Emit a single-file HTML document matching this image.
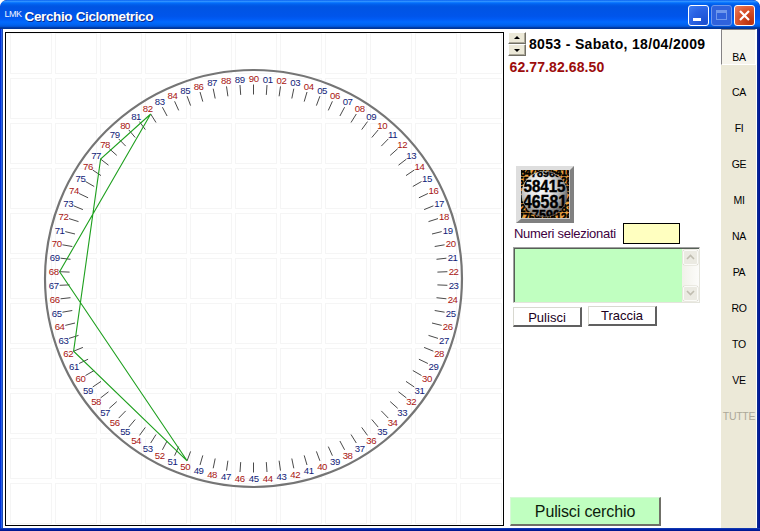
<!DOCTYPE html>
<html><head><meta charset="utf-8"><title>Cerchio Ciclometrico</title>
<style>
html,body{margin:0;padding:0;}
body{width:760px;height:531px;position:relative;overflow:hidden;background:#fff;font-family:"Liberation Sans",Arial,sans-serif;}
.abs{position:absolute;}
#win{position:absolute;left:0;top:0;width:760px;height:531px;background:linear-gradient(to right,#0030d8 0,#0030d8 1px,#2860e8 1px,#2860e8 2px,#1c4ab0 2px,#1c4ab0 3px,#0a2aa0 3px,#0a2aa0 757px,#0a2a90 757px,#0a2a90 758px,#06209a 758px,#06209a 759px,#001596 759px);border-radius:7px 7px 0 0;overflow:hidden;}
#title{position:absolute;left:0;top:0;width:760px;height:29px;border-radius:7px 7px 0 0;
background:linear-gradient(to bottom,#0058ee 0%,#3593ff 4%,#288eff 6%,#127dff 8%,#036ffc 10%,#0262ee 14%,#0057e5 20%,#0054e3 24%,#0055eb 56%,#005bf5 66%,#026afe 76%,#0062ef 86%,#0052d6 92%,#0040ab 94%,#003092 100%);}
#title .lmk{position:absolute;left:4.5px;top:10px;font-size:9px;color:#f0f6ff;line-height:9px;letter-spacing:-0.5px;}
#title .cap{position:absolute;left:24.5px;top:9px;font-size:13.5px;letter-spacing:-0.36px;font-weight:bold;color:#fff;line-height:16px;text-shadow:1px 1px 0 #0a2a8a;white-space:nowrap;}
.tb{position:absolute;top:5px;width:21px;height:21px;border-radius:3px;box-sizing:border-box;border:1px solid #fff;}
.tb.min{left:688px;background:radial-gradient(circle at 85% 90%,#1a4fd0 0%,#2a63e4 60%,#3f7df2 100%);}
.tb.max{left:711px;background:#2f62dc;border-color:#6f98ec;}
.tb.cls{left:734px;background:radial-gradient(circle at 80% 85%,#b9300c 0%,#d9522a 55%,#ee8060 100%);}
.tb.min i{position:absolute;left:4px;top:12px;width:8px;height:3px;background:#fff;}
.tb.max i{position:absolute;left:4px;top:4px;width:11px;height:10px;box-sizing:border-box;border:1px solid #6f98ec;border-top-width:3px;}
#client{position:absolute;left:3px;top:29px;width:754px;height:499px;background:#fff;}
#botb{position:absolute;left:0;top:528px;width:760px;height:3px;background:linear-gradient(to bottom,#1038b0 0,#1038b0 1px,#0020a8 1px,#0020a8 2px,#001890 2px);}
#canvasbox{position:absolute;left:5px;top:32px;width:499px;height:494px;box-sizing:border-box;border:1px solid #000;}
svg.cv{position:absolute;left:0;top:0;}
#strip{position:absolute;left:721px;top:29px;width:35px;height:499px;background:#ece9d8;}
.tab{position:absolute;left:721px;width:35px;height:36px;font-family:"Liberation Sans",Arial,sans-serif;font-size:10.5px;letter-spacing:-0.3px;color:#000;text-align:center;}
.tab span{position:absolute;left:1px;right:0;top:20px;line-height:14px;}
.tab.sel{box-sizing:border-box;border-left:1px solid #848284;border-top:1px solid #848284;border-right:1px solid #fff;border-bottom:1px solid #fff;background:#f6f4ec;}
.tab.sel span{left:1px;top:20px;}
.tab.dis{color:#aca899;}
.spin{position:absolute;left:508px;width:18px;height:12px;box-sizing:border-box;background:#ece9d8;border:1px solid;border-color:#fff #716f64 #716f64 #fff;box-shadow:inset -1px -1px 0 #aca899;}
.spin i{position:absolute;left:5px;width:0;height:0;border-left:3px solid transparent;border-right:3px solid transparent;}
.spin.up i{top:3px;border-bottom:3px solid #000;}
.spin.dn i{top:4px;border-top:3px solid #000;}
#date{position:absolute;left:529px;top:35px;font-size:14px;letter-spacing:0.33px;font-weight:bold;color:#000;line-height:18px;white-space:nowrap;}
#nums{position:absolute;left:509.5px;top:58px;font-size:14px;letter-spacing:0.1px;font-weight:bold;color:#9c0c0c;line-height:18px;white-space:nowrap;}
#imgbtn{position:absolute;left:516px;top:166px;width:58px;height:57px;box-sizing:border-box;background:#c8c8c8;border-style:solid;border-width:4px 4px 4px 5px;border-color:#dedede #808080 #808080 #dedede;box-shadow:inset 1px 1px 0 #bdbdbd;}
svg.ball{position:absolute;left:521px;top:170px;}
#lbl{position:absolute;left:514px;top:226px;font-size:13px;letter-spacing:-0.28px;color:#400040;line-height:16px;white-space:nowrap;}
#ybox{position:absolute;left:623px;top:223px;width:57px;height:21px;box-sizing:border-box;border:1px solid #000;background:#ffffc0;}
#ta{position:absolute;left:513px;top:247px;width:187px;height:56px;box-sizing:border-box;background:#c0ffc0;border:1px solid;border-color:#a0a0a0 #e4e4dc #e4e4dc #a0a0a0;box-shadow:inset 1px 1px 0 #566056;}
#sb{position:absolute;left:682px;top:249px;width:17px;height:53px;background:linear-gradient(to right,#f2f1ea,#fcfcfa);}
.sbb{position:absolute;left:683px;width:15px;height:15px;box-sizing:border-box;background:#ebeae2;border:1px solid #fbfbf8;border-radius:2px;box-shadow:0 0 0 0.5px #dddbd0;}
.sbb svg{position:absolute;left:2px;top:3px;}
.btn{position:absolute;box-sizing:border-box;background:#fff;border-style:solid;border-width:1px 2px 2px 1px;border-color:#d8d8d0 #606060 #606060 #d8d8d0;font-size:13px;color:#200020;text-align:center;white-space:nowrap;}
#big{position:absolute;left:510px;top:497px;width:151px;height:29px;letter-spacing:-0.13px;box-sizing:border-box;background:#c0ffc0;border-style:solid;border-width:1px 2px 2px 1px;border-color:#d8f8d8 #707068 #707068 #d8f8d8;font-size:16px;color:#0c1c0c;text-align:center;line-height:28px;white-space:nowrap;}
</style></head><body>
<div id="win">
<div id="title"><span class="lmk">LMK</span><span class="cap">Cerchio Ciclometrico</span>
<div class="tb min"><i></i></div><div class="tb max"><i></i></div>
<div class="tb cls"><svg width="19" height="19" viewBox="0 0 19 19"><path d="M5 5L14 14M14 5L5 14" stroke="#fff" stroke-width="2.2" stroke-linecap="butt"/></svg></div>
</div>
<div id="client"></div><div id="botb"></div>
</div>
<div id="canvasbox"></div>
<svg class="cv" width="760" height="531" viewBox="0 0 760 531"><g fill="none" stroke="#f5f5f5" stroke-width="1" shape-rendering="crispEdges"><rect x="10.5" y="33.5" width="41" height="40"/><rect x="10.5" y="78.5" width="41" height="40"/><rect x="10.5" y="123.5" width="41" height="40"/><rect x="10.5" y="168.5" width="41" height="40"/><rect x="10.5" y="213.5" width="41" height="40"/><rect x="10.5" y="258.5" width="41" height="40"/><rect x="10.5" y="303.5" width="41" height="40"/><rect x="10.5" y="348.5" width="41" height="40"/><rect x="10.5" y="393.5" width="41" height="40"/><rect x="10.5" y="438.5" width="41" height="40"/><rect x="10.5" y="483.5" width="41" height="40"/><rect x="55.5" y="33.5" width="41" height="40"/><rect x="55.5" y="78.5" width="41" height="40"/><rect x="55.5" y="123.5" width="41" height="40"/><rect x="55.5" y="168.5" width="41" height="40"/><rect x="55.5" y="213.5" width="41" height="40"/><rect x="55.5" y="258.5" width="41" height="40"/><rect x="55.5" y="303.5" width="41" height="40"/><rect x="55.5" y="348.5" width="41" height="40"/><rect x="55.5" y="393.5" width="41" height="40"/><rect x="55.5" y="438.5" width="41" height="40"/><rect x="55.5" y="483.5" width="41" height="40"/><rect x="100.5" y="33.5" width="41" height="40"/><rect x="100.5" y="78.5" width="41" height="40"/><rect x="100.5" y="123.5" width="41" height="40"/><rect x="100.5" y="168.5" width="41" height="40"/><rect x="100.5" y="213.5" width="41" height="40"/><rect x="100.5" y="258.5" width="41" height="40"/><rect x="100.5" y="303.5" width="41" height="40"/><rect x="100.5" y="348.5" width="41" height="40"/><rect x="100.5" y="393.5" width="41" height="40"/><rect x="100.5" y="438.5" width="41" height="40"/><rect x="100.5" y="483.5" width="41" height="40"/><rect x="145.5" y="33.5" width="41" height="40"/><rect x="145.5" y="78.5" width="41" height="40"/><rect x="145.5" y="123.5" width="41" height="40"/><rect x="145.5" y="168.5" width="41" height="40"/><rect x="145.5" y="213.5" width="41" height="40"/><rect x="145.5" y="258.5" width="41" height="40"/><rect x="145.5" y="303.5" width="41" height="40"/><rect x="145.5" y="348.5" width="41" height="40"/><rect x="145.5" y="393.5" width="41" height="40"/><rect x="145.5" y="438.5" width="41" height="40"/><rect x="145.5" y="483.5" width="41" height="40"/><rect x="190.5" y="33.5" width="41" height="40"/><rect x="190.5" y="78.5" width="41" height="40"/><rect x="190.5" y="123.5" width="41" height="40"/><rect x="190.5" y="168.5" width="41" height="40"/><rect x="190.5" y="213.5" width="41" height="40"/><rect x="190.5" y="258.5" width="41" height="40"/><rect x="190.5" y="303.5" width="41" height="40"/><rect x="190.5" y="348.5" width="41" height="40"/><rect x="190.5" y="393.5" width="41" height="40"/><rect x="190.5" y="438.5" width="41" height="40"/><rect x="190.5" y="483.5" width="41" height="40"/><rect x="235.5" y="33.5" width="41" height="40"/><rect x="235.5" y="78.5" width="41" height="40"/><rect x="235.5" y="123.5" width="41" height="40"/><rect x="235.5" y="168.5" width="41" height="40"/><rect x="235.5" y="213.5" width="41" height="40"/><rect x="235.5" y="258.5" width="41" height="40"/><rect x="235.5" y="303.5" width="41" height="40"/><rect x="235.5" y="348.5" width="41" height="40"/><rect x="235.5" y="393.5" width="41" height="40"/><rect x="235.5" y="438.5" width="41" height="40"/><rect x="235.5" y="483.5" width="41" height="40"/><rect x="280.5" y="33.5" width="41" height="40"/><rect x="280.5" y="78.5" width="41" height="40"/><rect x="280.5" y="123.5" width="41" height="40"/><rect x="280.5" y="168.5" width="41" height="40"/><rect x="280.5" y="213.5" width="41" height="40"/><rect x="280.5" y="258.5" width="41" height="40"/><rect x="280.5" y="303.5" width="41" height="40"/><rect x="280.5" y="348.5" width="41" height="40"/><rect x="280.5" y="393.5" width="41" height="40"/><rect x="280.5" y="438.5" width="41" height="40"/><rect x="280.5" y="483.5" width="41" height="40"/><rect x="325.5" y="33.5" width="41" height="40"/><rect x="325.5" y="78.5" width="41" height="40"/><rect x="325.5" y="123.5" width="41" height="40"/><rect x="325.5" y="168.5" width="41" height="40"/><rect x="325.5" y="213.5" width="41" height="40"/><rect x="325.5" y="258.5" width="41" height="40"/><rect x="325.5" y="303.5" width="41" height="40"/><rect x="325.5" y="348.5" width="41" height="40"/><rect x="325.5" y="393.5" width="41" height="40"/><rect x="325.5" y="438.5" width="41" height="40"/><rect x="325.5" y="483.5" width="41" height="40"/><rect x="370.5" y="33.5" width="41" height="40"/><rect x="370.5" y="78.5" width="41" height="40"/><rect x="370.5" y="123.5" width="41" height="40"/><rect x="370.5" y="168.5" width="41" height="40"/><rect x="370.5" y="213.5" width="41" height="40"/><rect x="370.5" y="258.5" width="41" height="40"/><rect x="370.5" y="303.5" width="41" height="40"/><rect x="370.5" y="348.5" width="41" height="40"/><rect x="370.5" y="393.5" width="41" height="40"/><rect x="370.5" y="438.5" width="41" height="40"/><rect x="370.5" y="483.5" width="41" height="40"/><rect x="415.5" y="33.5" width="41" height="40"/><rect x="415.5" y="78.5" width="41" height="40"/><rect x="415.5" y="123.5" width="41" height="40"/><rect x="415.5" y="168.5" width="41" height="40"/><rect x="415.5" y="213.5" width="41" height="40"/><rect x="415.5" y="258.5" width="41" height="40"/><rect x="415.5" y="303.5" width="41" height="40"/><rect x="415.5" y="348.5" width="41" height="40"/><rect x="415.5" y="393.5" width="41" height="40"/><rect x="415.5" y="438.5" width="41" height="40"/><rect x="415.5" y="483.5" width="41" height="40"/><rect x="460.5" y="33.5" width="41" height="40"/><rect x="460.5" y="78.5" width="41" height="40"/><rect x="460.5" y="123.5" width="41" height="40"/><rect x="460.5" y="168.5" width="41" height="40"/><rect x="460.5" y="213.5" width="41" height="40"/><rect x="460.5" y="258.5" width="41" height="40"/><rect x="460.5" y="303.5" width="41" height="40"/><rect x="460.5" y="348.5" width="41" height="40"/><rect x="460.5" y="393.5" width="41" height="40"/><rect x="460.5" y="438.5" width="41" height="40"/><rect x="460.5" y="483.5" width="41" height="40"/></g><circle cx="253.5" cy="278.5" r="208.5" fill="none" stroke="#757575" stroke-width="2.15"/><path d="M267.0 85.0L266.3 94.9M280.5 86.4L279.1 96.3M293.8 88.7L291.8 98.5M307.0 92.0L304.2 101.6M319.9 96.2L316.4 105.6M332.4 101.3L328.3 110.4M344.6 107.2L339.9 116.0M356.3 114.0L351.0 122.5M367.5 121.6L361.7 129.6M378.2 129.9L371.8 137.5M388.3 138.9L381.3 146.1M397.7 148.7L390.2 155.4M406.4 159.1L398.5 165.2M414.3 170.0L406.0 175.6M421.5 181.5L412.8 186.5M427.9 193.5L418.9 197.8M433.4 205.8L424.1 209.6M438.0 218.6L428.5 221.6M441.7 231.6L432.0 234.0M444.6 244.8L434.7 246.5M446.4 258.2L436.5 259.3M447.4 271.7L437.4 272.1M447.4 285.3L437.4 284.9M446.4 298.8L436.5 297.7M444.6 312.2L434.7 310.5M441.7 325.4L432.0 323.0M438.0 338.4L428.5 335.4M433.4 351.2L424.1 347.4M427.9 363.5L418.9 359.2M421.5 375.5L412.8 370.5M414.3 387.0L406.0 381.4M406.4 397.9L398.5 391.8M397.7 408.3L390.2 401.6M388.3 418.1L381.3 410.9M378.2 427.1L371.8 419.5M367.5 435.4L361.7 427.4M356.3 443.0L351.0 434.5M344.6 449.8L339.9 441.0M332.4 455.7L328.3 446.6M319.9 460.8L316.4 451.4M307.0 465.0L304.2 455.4M293.8 468.3L291.8 458.5M280.5 470.6L279.1 460.7M267.0 472.0L266.3 462.1M253.5 472.5L253.5 462.5M240.0 472.0L240.7 462.1M226.5 470.6L227.9 460.7M213.2 468.3L215.2 458.5M200.0 465.0L202.8 455.4M187.1 460.8L190.6 451.4M174.6 455.7L178.7 446.6M162.4 449.8L167.1 441.0M150.7 443.0L156.0 434.5M139.5 435.4L145.3 427.4M128.8 427.1L135.2 419.5M118.7 418.1L125.7 410.9M109.3 408.3L116.8 401.6M100.6 397.9L108.5 391.8M92.7 387.0L101.0 381.4M85.5 375.5L94.2 370.5M79.1 363.5L88.1 359.2M73.6 351.2L82.9 347.4M69.0 338.4L78.5 335.4M65.3 325.4L75.0 323.0M62.4 312.2L72.3 310.5M60.6 298.8L70.5 297.7M59.6 285.3L69.6 284.9M59.6 271.7L69.6 272.1M60.6 258.2L70.5 259.3M62.4 244.8L72.3 246.5M65.3 231.6L75.0 234.0M69.0 218.6L78.5 221.6M73.6 205.8L82.9 209.6M79.1 193.5L88.1 197.8M85.5 181.5L94.2 186.5M92.7 170.0L101.0 175.6M100.6 159.1L108.5 165.2M109.3 148.7L116.8 155.4M118.7 138.9L125.7 146.1M128.8 129.9L135.2 137.5M139.5 121.6L145.3 129.6M150.7 114.0L156.0 122.5M162.4 107.2L167.1 116.0M174.6 101.3L178.7 110.4M187.1 96.2L190.6 105.6M200.0 92.0L202.8 101.6M213.2 88.7L215.2 98.5M226.5 86.4L227.9 96.3M240.0 85.0L240.7 94.9M253.5 84.5L253.5 94.5" stroke="#4a4a4a" stroke-width="1" fill="none"/><polygon points="73.6,351.2 100.6,159.1 150.7,114.0 59.6,271.7 187.1,460.8" fill="none" stroke="#1fa01f" stroke-width="1.1"/><g font-family="Liberation Sans, Arial, sans-serif" font-size="9.6" letter-spacing="-0.4" text-anchor="middle"><text x="267.7" y="82.5" fill="#101c78">01</text><text x="281.5" y="83.9" fill="#a81410">02</text><text x="295.3" y="86.4" fill="#101c78">03</text><text x="308.8" y="89.7" fill="#a81410">04</text><text x="322.1" y="94.1" fill="#101c78">05</text><text x="335.0" y="99.3" fill="#a81410">06</text><text x="347.6" y="105.4" fill="#101c78">07</text><text x="359.7" y="112.4" fill="#a81410">08</text><text x="371.3" y="120.2" fill="#101c78">09</text><text x="382.3" y="128.8" fill="#a81410">10</text><text x="392.6" y="138.1" fill="#101c78">11</text><text x="402.3" y="148.2" fill="#a81410">12</text><text x="411.3" y="158.9" fill="#101c78">13</text><text x="419.5" y="170.2" fill="#a81410">14</text><text x="426.9" y="182.0" fill="#101c78">15</text><text x="433.5" y="194.3" fill="#a81410">16</text><text x="439.1" y="207.1" fill="#101c78">17</text><text x="443.9" y="220.2" fill="#a81410">18</text><text x="447.8" y="233.6" fill="#101c78">19</text><text x="450.7" y="247.3" fill="#a81410">20</text><text x="452.6" y="261.1" fill="#101c78">21</text><text x="453.6" y="275.0" fill="#a81410">22</text><text x="453.6" y="289.0" fill="#101c78">23</text><text x="452.6" y="302.9" fill="#a81410">24</text><text x="450.7" y="316.7" fill="#101c78">25</text><text x="447.8" y="330.4" fill="#a81410">26</text><text x="443.9" y="343.8" fill="#101c78">27</text><text x="439.1" y="356.9" fill="#a81410">28</text><text x="433.5" y="369.7" fill="#101c78">29</text><text x="426.9" y="382.0" fill="#a81410">30</text><text x="419.5" y="393.8" fill="#101c78">31</text><text x="411.3" y="405.1" fill="#a81410">32</text><text x="402.3" y="415.8" fill="#101c78">33</text><text x="392.6" y="425.9" fill="#a81410">34</text><text x="382.3" y="435.2" fill="#101c78">35</text><text x="371.3" y="443.8" fill="#a81410">36</text><text x="359.7" y="451.6" fill="#101c78">37</text><text x="347.6" y="458.6" fill="#a81410">38</text><text x="335.0" y="464.7" fill="#101c78">39</text><text x="322.1" y="469.9" fill="#a81410">40</text><text x="308.8" y="474.3" fill="#101c78">41</text><text x="295.3" y="477.6" fill="#a81410">42</text><text x="281.5" y="480.1" fill="#101c78">43</text><text x="267.7" y="481.5" fill="#a81410">44</text><text x="253.7" y="482.0" fill="#101c78">45</text><text x="239.7" y="481.5" fill="#a81410">46</text><text x="225.9" y="480.1" fill="#101c78">47</text><text x="212.1" y="477.6" fill="#a81410">48</text><text x="198.6" y="474.3" fill="#101c78">49</text><text x="185.3" y="469.9" fill="#a81410">50</text><text x="172.4" y="464.7" fill="#101c78">51</text><text x="159.8" y="458.6" fill="#a81410">52</text><text x="147.7" y="451.6" fill="#101c78">53</text><text x="136.1" y="443.8" fill="#a81410">54</text><text x="125.1" y="435.2" fill="#101c78">55</text><text x="114.8" y="425.9" fill="#a81410">56</text><text x="105.1" y="415.8" fill="#101c78">57</text><text x="96.1" y="405.1" fill="#a81410">58</text><text x="87.9" y="393.8" fill="#101c78">59</text><text x="80.5" y="382.0" fill="#a81410">60</text><text x="73.9" y="369.7" fill="#101c78">61</text><text x="68.3" y="356.9" fill="#a81410">62</text><text x="63.5" y="343.8" fill="#101c78">63</text><text x="59.6" y="330.4" fill="#a81410">64</text><text x="56.7" y="316.7" fill="#101c78">65</text><text x="54.8" y="302.9" fill="#a81410">66</text><text x="53.8" y="289.0" fill="#101c78">67</text><text x="53.8" y="275.0" fill="#a81410">68</text><text x="54.8" y="261.1" fill="#101c78">69</text><text x="56.7" y="247.3" fill="#a81410">70</text><text x="59.6" y="233.6" fill="#101c78">71</text><text x="63.5" y="220.2" fill="#a81410">72</text><text x="68.3" y="207.1" fill="#101c78">73</text><text x="73.9" y="194.3" fill="#a81410">74</text><text x="80.5" y="182.0" fill="#101c78">75</text><text x="87.9" y="170.2" fill="#a81410">76</text><text x="96.1" y="158.9" fill="#101c78">77</text><text x="105.1" y="148.2" fill="#a81410">78</text><text x="114.8" y="138.1" fill="#101c78">79</text><text x="125.1" y="128.8" fill="#a81410">80</text><text x="136.1" y="120.2" fill="#101c78">81</text><text x="147.7" y="112.4" fill="#a81410">82</text><text x="159.8" y="105.4" fill="#101c78">83</text><text x="172.4" y="99.3" fill="#a81410">84</text><text x="185.3" y="94.1" fill="#101c78">85</text><text x="198.6" y="89.7" fill="#a81410">86</text><text x="212.1" y="86.4" fill="#101c78">87</text><text x="225.9" y="83.9" fill="#a81410">88</text><text x="239.7" y="82.5" fill="#101c78">89</text><text x="253.7" y="82.0" fill="#a81410">90</text></g></svg>
<div id="strip"></div>
<div class="tab sel" style="top:29px"><span>BA</span></div><div class="tab" style="top:65px"><span>CA</span></div><div class="tab" style="top:101px"><span>FI</span></div><div class="tab" style="top:137px"><span>GE</span></div><div class="tab" style="top:173px"><span>MI</span></div><div class="tab" style="top:209px"><span>NA</span></div><div class="tab" style="top:245px"><span>PA</span></div><div class="tab" style="top:281px"><span>RO</span></div><div class="tab" style="top:317px"><span>TO</span></div><div class="tab" style="top:353px"><span>VE</span></div><div class="tab dis" style="top:389px"><span>TUTTE</span></div>
<div class="spin up" style="top:32px"><i></i></div><div class="spin dn" style="top:44px"><i></i></div>
<div id="date">8053 - Sabato, 18/04/2009</div>
<div id="nums">62.77.82.68.50</div>
<div id="imgbtn"></div>
<svg class="ball" width="48" height="48" viewBox="0 0 48 48">
<defs><radialGradient id="bg" cx="40%" cy="36%" r="62%"><stop offset="0" stop-color="#ffffff"/><stop offset="0.45" stop-color="#e4e4e4"/><stop offset="0.8" stop-color="#a4a4a4"/><stop offset="1" stop-color="#686868"/></radialGradient>
<clipPath id="bc"><circle cx="23.5" cy="24" r="22.5"/></clipPath><clipPath id="sq"><rect width="48" height="48"/></clipPath></defs>
<g clip-path="url(#sq)">
<rect width="48" height="48" fill="#eea040"/>
<g font-family="Liberation Sans, Arial, sans-serif" font-weight="bold" font-size="10" fill="#000" stroke="#000" stroke-width="0.55">
<text x="-1" y="6" textLength="52">8478935416</text><text x="-3" y="15" textLength="54">5584155928</text><text x="-1" y="24" textLength="52">3465814075</text><text x="-3" y="33" textLength="54">1975942634</text><text x="-1" y="42" textLength="52">2675904183</text><text x="-3" y="51" textLength="54">7759048126</text>
</g>
<circle cx="23.5" cy="24" r="23" fill="url(#bg)"/>
<g clip-path="url(#bc)" font-family="Liberation Sans, Arial, sans-serif" font-weight="bold" fill="#000" stroke="#000" stroke-width="0.45">
<text x="10" y="6.5" font-size="11" textLength="30" lengthAdjust="spacingAndGlyphs">78963</text>
<text x="2.5" y="21.5" font-size="16.5" textLength="42" lengthAdjust="spacingAndGlyphs">58415</text>
<text x="2" y="37.5" font-size="18" textLength="44" lengthAdjust="spacingAndGlyphs">46581</text>
<text x="11" y="50" font-size="14" textLength="28" lengthAdjust="spacingAndGlyphs">7590</text>
</g>
</g>
</svg>
<div id="lbl">Numeri selezionati</div>
<div id="ybox"></div>
<div id="ta"></div>
<div id="sb"></div>
<div class="sbb" style="top:250px"><svg width="9" height="6" viewBox="0 0 9 6"><path d="M1 5L4.5 1.5L8 5" stroke="#c0bdb0" stroke-width="1.6" fill="none"/></svg></div>
<div class="sbb" style="top:286px"><svg width="9" height="6" viewBox="0 0 9 6"><path d="M1 1L4.5 4.5L8 1" stroke="#c0bdb0" stroke-width="1.6" fill="none"/></svg></div>
<div class="btn" style="left:513px;top:307px;width:69px;height:20px;line-height:19px;">Pulisci</div>
<div class="btn" style="left:588px;top:306px;width:69px;height:20px;line-height:17px;">Traccia</div>
<div id="big">Pulisci cerchio</div>
</body></html>
